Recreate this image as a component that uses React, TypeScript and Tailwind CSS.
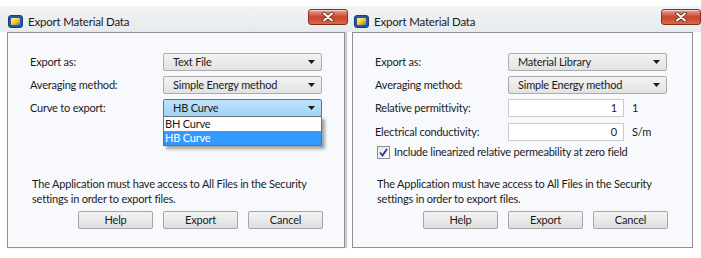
import React from "react";

const WinIcon = () => (
  <svg width="15" height="13" viewBox="0 0 15 13">
    <defs>
      <linearGradient id="wi" x1="0" y1="0" x2="1" y2="1">
        <stop offset="0" stopColor="#fff6a8" />
        <stop offset="0.55" stopColor="#f2c61c" />
        <stop offset="1" stopColor="#3a7fd8" />
      </linearGradient>
    </defs>
    <rect x="0.5" y="0.5" width="14" height="12" rx="2.5" fill="#2a56a8" stroke="#1b3a78" />
    <rect x="3" y="3" width="9" height="7" rx="1" fill="url(#wi)" />
  </svg>
);

const CloseButton = () => (
  <div className="flex h-[16px] w-[40px] items-center justify-center rounded-[3px] border border-[#8a2c1d] bg-gradient-to-b from-[#eaa08f] via-[#c8442b] to-[#d8684a] shadow-[inset_0_1px_0_rgba(255,255,255,0.5)]">
    <svg width="12" height="10" viewBox="0 0 12 10">
      <path d="M2 1.5 L10 8.5 M10 1.5 L2 8.5" stroke="#5a2418" strokeWidth="3.6" strokeLinecap="round" />
      <path d="M2 1.5 L10 8.5 M10 1.5 L2 8.5" stroke="#ffffff" strokeWidth="2" strokeLinecap="round" />
    </svg>
  </div>
);

const Arrow = () => (
  <svg width="7" height="4" viewBox="0 0 7 4" className="shrink-0">
    <path d="M0 0 L7 0 L3.5 4 Z" fill="#1a1a1a" />
  </svg>
);

const Select = ({ value, active, options }: { value: string; active?: boolean; options?: string[] }) => (
  <div className="relative">
    <div
      className={
        active
          ? "flex h-[18px] w-[159px] items-center justify-between rounded-[2px] border border-[#3c7fb1] bg-gradient-to-b from-[#bfe3fa] to-[#9fd3f5] pl-[9px] pr-[6px]"
          : "flex h-[18px] w-[159px] items-center justify-between rounded-[2px] border border-[#acacac] bg-gradient-to-b from-[#f3f3f3] to-[#e2e2e2] pl-[9px] pr-[6px]"
      }
    >
      <span>{value}</span>
      <Arrow />
    </div>
    {options && (
      <div className="absolute left-0 top-[17px] z-10 w-[159px] border border-[#6d6d6d] bg-white shadow-[3px_3px_3px_rgba(0,0,0,0.35)]">
        {options.map((o) => (
          <div
            key={o}
            className={
              o === value
                ? "h-[14px] bg-[#3399ff] pl-[1px] leading-[14px] text-white"
                : "h-[14px] pl-[1px] leading-[14px]"
            }
          >
            {o}
          </div>
        ))}
      </div>
    )}
  </div>
);

const Field = ({ value, unit }: { value: string; unit: string }) => (
  <div className="flex items-center">
    <div className="flex h-[18px] w-[116px] items-center justify-end border border-[#c8cacf] bg-white pr-[6px]">
      {value}
    </div>
    <span className="ml-[8px]">{unit}</span>
  </div>
);

const Row = ({ label, children }: { label: string; children: React.ReactNode }) => (
  <div className="flex items-center">
    <span className="w-[133px] shrink-0">{label}</span>
    {children}
  </div>
);

const Button = ({ children }: { children: React.ReactNode }) => (
  <div className="flex h-[18px] w-[75px] items-center justify-center rounded-[2px] border border-[#a5a5a5] bg-gradient-to-b from-[#f4f4f4] to-[#dedede]">
    {children}
  </div>
);

const Footer = () => (
  <div className="mt-auto flex flex-col pb-[18px]">
    <div className="pl-[2px] leading-[15px]">
      <div className="whitespace-nowrap">The Application must have access to All Files in the Security</div>
      <div className="whitespace-nowrap">settings in order to export files.</div>
    </div>
    <div className="mt-[5px] flex gap-[10px] pl-[48px]">
      <Button>Help</Button>
      <Button>Export</Button>
      <Button>Cancel</Button>
    </div>
  </div>
);

const Window = ({
  left,
  width,
  panel,
  children,
}: {
  left: number;
  width: string;
  panel: string;
  children: React.ReactNode;
}) => (
  <div className={`flex h-[258px] shrink-0 ${width} flex-col pt-[6px]`}>
    <div className="flex h-[26px] items-start bg-gradient-to-b from-[#f1f3f5] to-[#e8ebee]">
      <div className="flex flex-1 items-center pt-[7px]" style={{ paddingLeft: left }}>
        <WinIcon />
        <span className="ml-[5px] text-[11.5px]">Export Material Data</span>
      </div>
      <div className="pt-[3px]">
        <CloseButton />
      </div>
    </div>
    <div className={`flex h-[216px] flex-col border border-[#8f9194] bg-[#f8f9fc] pl-[22px] ${panel}`}>
      {children}
      <Footer />
    </div>
  </div>
);

export default function App() {
  return (
    <div className="flex h-[258px] w-[701px] overflow-hidden bg-white font-['Lato','Noto_Sans',sans-serif] text-[11px] tracking-[-0.2px] text-[#1b1b1b]">
      <Window left={8} width="w-[348px]" panel="ml-[7px] w-[338px] shadow-[2px_0_1px_#c9ccd0]">
        <div className="mt-[20px] flex flex-col gap-[5px]">
          <Row label="Export as:">
            <Select value="Text File" />
          </Row>
          <Row label="Averaging method:">
            <Select value="Simple Energy method" />
          </Row>
          <Row label="Curve to export:">
            <Select value="HB Curve" active options={["BH Curve", "HB Curve"]} />
          </Row>
        </div>
      </Window>
      <Window left={6} width="w-[353px]" panel="ml-[4px] w-[341px]">
        <div className="mt-[20px] flex flex-col gap-[5px]">
          <Row label="Export as:">
            <Select value="Material Library" />
          </Row>
          <Row label="Averaging method:">
            <Select value="Simple Energy method" />
          </Row>
          <Row label="Relative permittivity:">
            <Field value="1" unit="1" />
          </Row>
          <div className="mt-[1px]">
            <Row label="Electrical conductivity:">
              <Field value="0" unit="S/m" />
            </Row>
          </div>
          <label className="mt-[-2px] flex items-center gap-[4px] pl-[2px]">
            <span className="flex h-[13px] w-[13px] items-center justify-center border border-[#8f8f8f] bg-gradient-to-br from-[#e6e6e6] to-white">
              <svg width="9" height="9" viewBox="0 0 9 9">
                <path d="M1 4.5 L3.5 7.5 L8 1" stroke="#21388b" strokeWidth="1.8" fill="none" />
              </svg>
            </span>
            <span>Include linearized relative permeability at zero field</span>
          </label>
        </div>
      </Window>
    </div>
  );
}
